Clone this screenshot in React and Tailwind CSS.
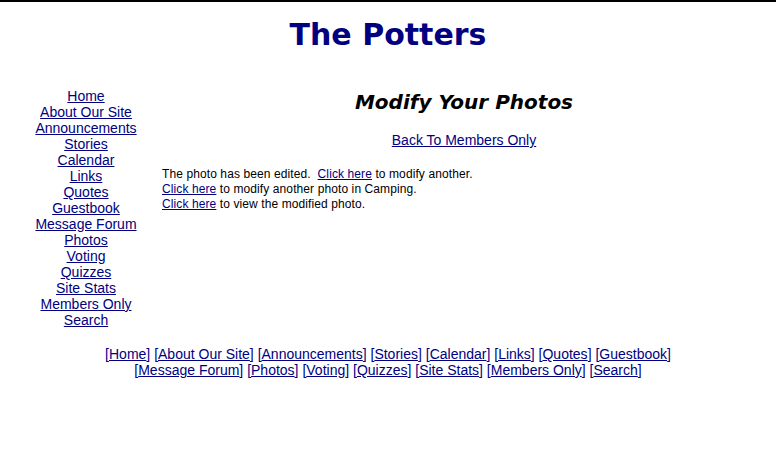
import React from "react";

const links = [
  "Home",
  "About Our Site",
  "Announcements",
  "Stories",
  "Calendar",
  "Links",
  "Quotes",
  "Guestbook",
  "Message Forum",
  "Photos",
  "Voting",
  "Quizzes",
  "Site Stats",
  "Members Only",
  "Search",
];

const row1 = links.slice(0, 8);
const row2 = links.slice(8);

function FooterRow({ items }) {
  return (
    <div>
      {items.map((l, i) => (
        <span key={l}>
          [<a href="#" className="underline text-[#000080]">{l}</a>]
          {i < items.length - 1 ? " " : ""}
        </span>
      ))}
    </div>
  );
}

export default function App() {
  return (
    <div className="w-[776px] h-[457px] bg-white border-t-2 border-black font-['Liberation_Sans',Arial,sans-serif] text-black overflow-hidden">
      {/* Header */}
      <h1 className="text-center pt-[15px] h-[86px] font-['DejaVu_Sans',Verdana,sans-serif] font-bold text-[30px] leading-[36px] text-[#000080]">
        The Potters
      </h1>

      <div className="flex">
        {/* Sidebar */}
        <div className="w-[172px] shrink-0 flex flex-col items-center text-[14px] leading-[16px]">
          {links.map((l) => (
            <a key={l} href="#" className="underline text-[#000080]">
              {l}
            </a>
          ))}
        </div>

        {/* Content */}
        <div className="flex-1 -ml-[10px] pr-[10px]">
          <h2 className="text-center font-['DejaVu_Sans',Verdana,sans-serif] font-bold italic text-[20px] leading-[24px] mt-[2px]">
            Modify Your Photos
          </h2>
          <div className="text-center text-[14px] leading-[16px] mt-[18px]">
            <a href="#" className="underline text-[#000080]">Back To Members Only</a>
          </div>
          <div className="text-[12px] leading-[15px] mt-[19px] tracking-[0.1px]">
            <div>
              The photo has been edited.&nbsp;{" "}
              <a href="#" className="underline text-[#000080]">Click here</a> to modify another.
            </div>
            <div>
              <a href="#" className="underline text-[#000080]">Click here</a> to modify another photo in Camping.
            </div>
            <div>
              <a href="#" className="underline text-[#000080]">Click here</a> to view the modified photo.
            </div>
          </div>
        </div>
      </div>

      {/* Footer */}
      <div className="text-center text-[14px] leading-[16px] mt-[18px] text-[#000080]">
        <FooterRow items={row1} />
        <FooterRow items={row2} />
      </div>
    </div>
  );
}
